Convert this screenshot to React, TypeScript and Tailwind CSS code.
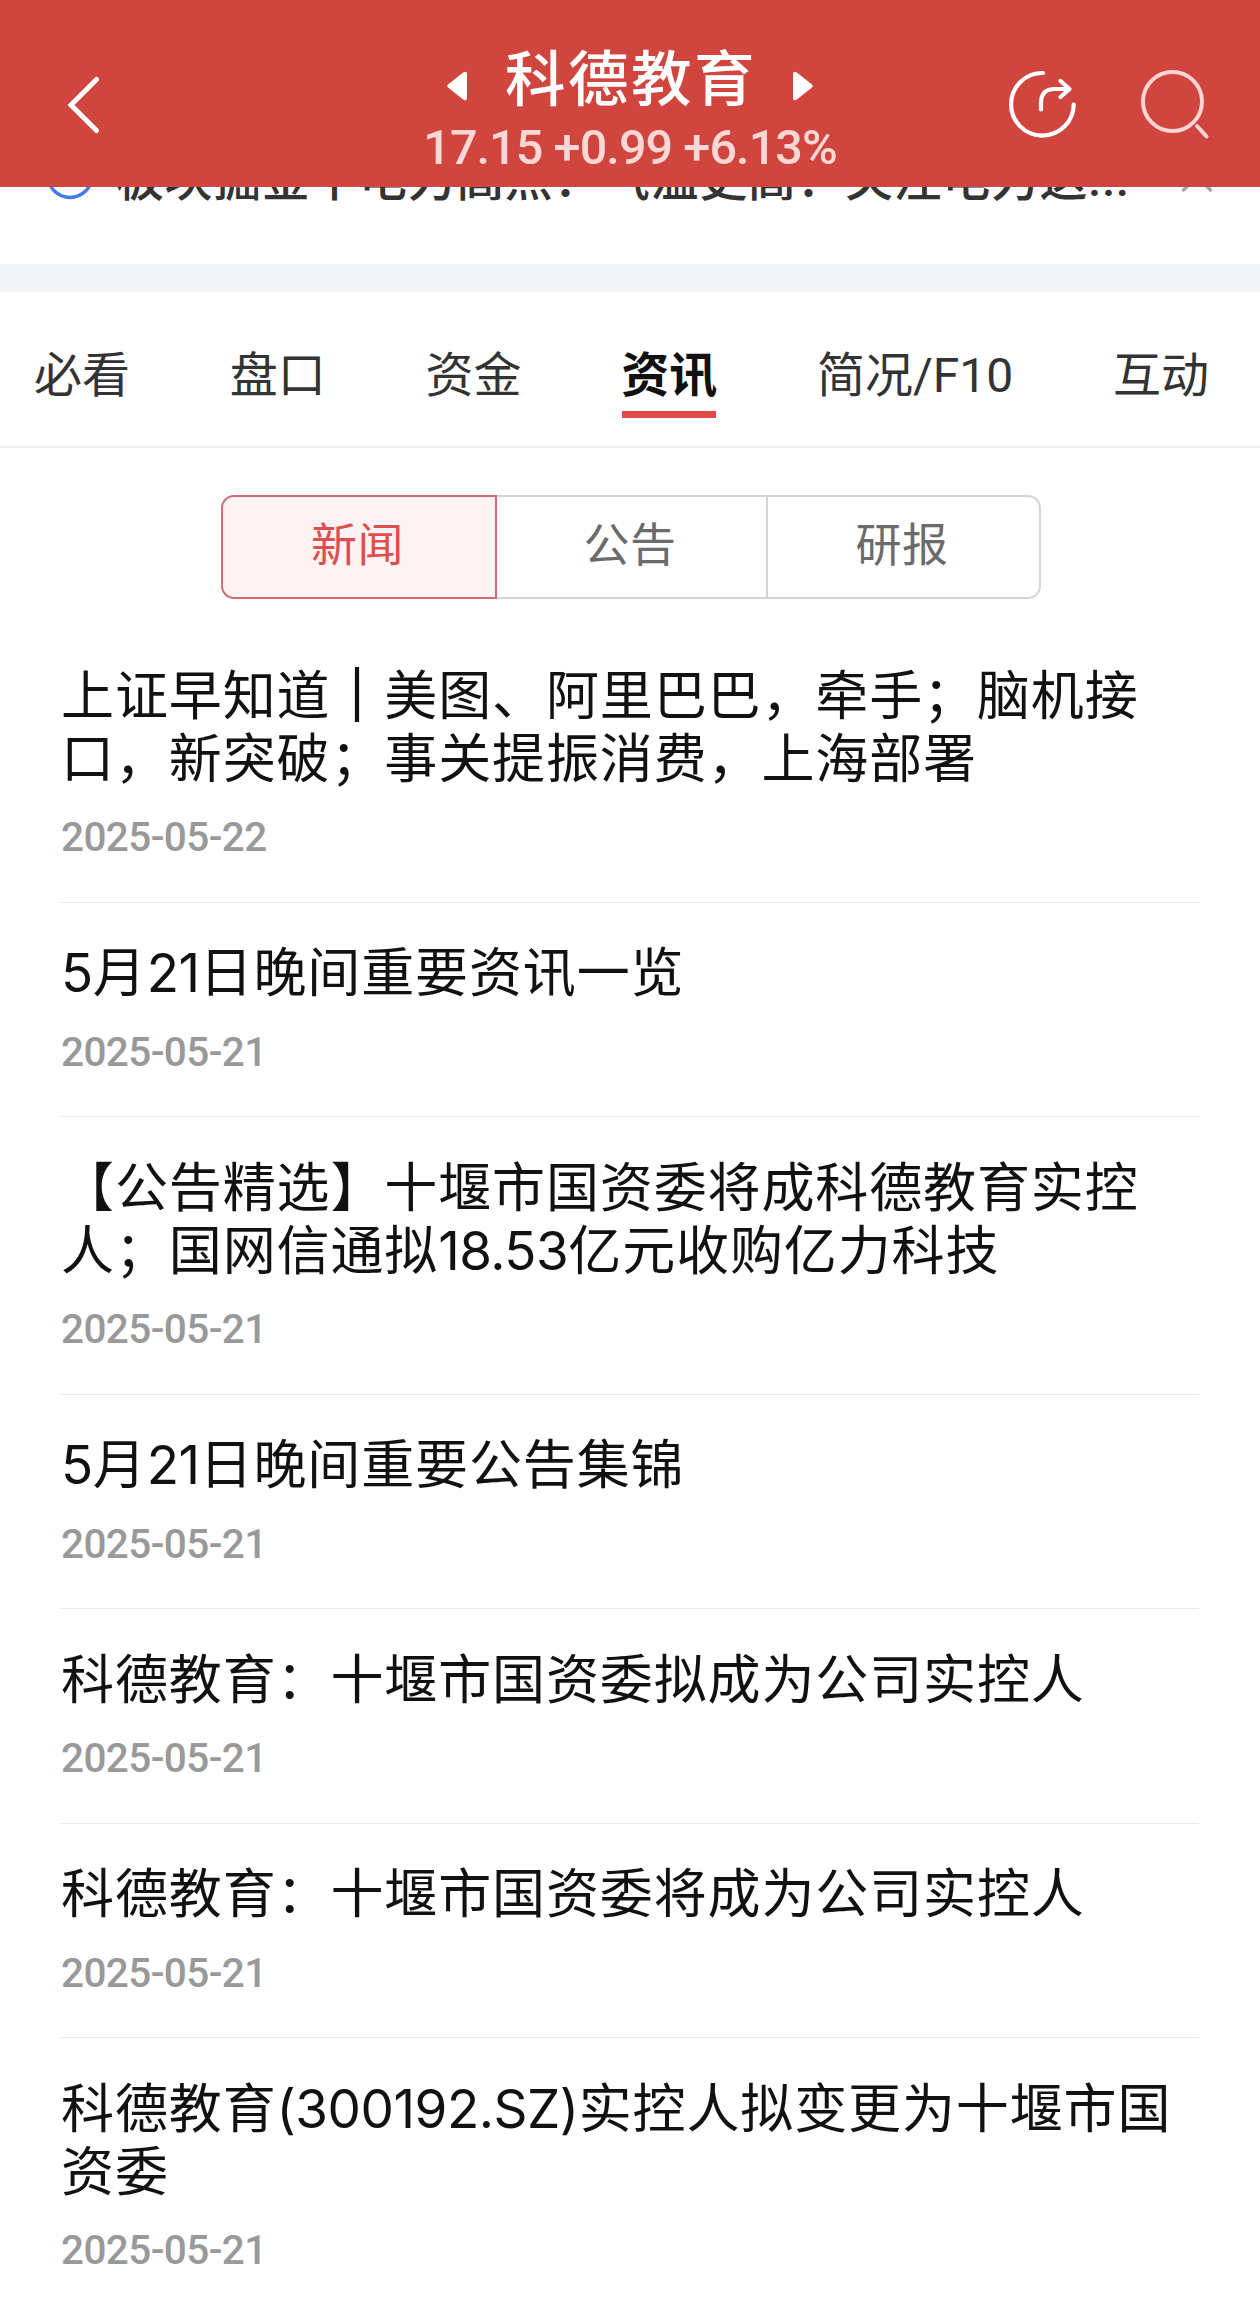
import { useState } from "react";
import clsx from "clsx";

const tabs = ["必看", "盘口", "资金", "资讯", "简况/F10", "互动"];
const segments = ["新闻", "公告", "研报"];

const news = [
  { lines: ["上证早知道｜美图、阿里巴巴，牵手；脑机接", "口，新突破；事关提振消费，上海部署"], date: "2025-05-22" },
  { lines: ["5月21日晚间重要资讯一览"], date: "2025-05-21" },
  { lines: ["【公告精选】十堰市国资委将成科德教育实控", "人；国网信通拟18.53亿元收购亿力科技"], date: "2025-05-21" },
  { lines: ["5月21日晚间重要公告集锦"], date: "2025-05-21" },
  { lines: ["科德教育：十堰市国资委拟成为公司实控人"], date: "2025-05-21" },
  { lines: ["科德教育：十堰市国资委将成为公司实控人"], date: "2025-05-21" },
  { lines: ["科德教育(300192.SZ)实控人拟变更为十堰市国", "资委"], date: "2025-05-21" },
];

function Header() {
  return (
    <header className="relative z-10 flex h-[187px] bg-[#d0453e] text-white">
      <button aria-label="返回" className="mt-[75px] ml-[66px] h-[60px] w-[36px]">
        <svg width="36" height="60" viewBox="0 0 36 60" fill="none" stroke="currentColor" strokeWidth="5" strokeLinecap="round">
          <path d="M30.5 4.5 5 30l25.500 25.500" />
        </svg>
      </button>

      <div className="ml-[298px] flex w-[460px] flex-col items-center">
        <div className="mt-[42px] flex items-center">
          <svg width="20" height="30" viewBox="0 0 20 30" className="mt-[21px]" fill="currentColor">
            <path d="M1 13.500 16.500 1.200Q20 -.5 20 3v24q0 3.500-3.500 1.800L1 16.500q-1.500-1.500 0-3Z" />
          </svg>
          <h1 className="mr-[36px] ml-[38px] text-[60.500px] leading-[66px] font-medium tracking-[2.500px]">科德教育</h1>
          <svg width="20" height="30" viewBox="0 0 20 30" className="mt-[21px]" fill="currentColor">
            <path d="M19 13.500 3.500 1.200Q0 -.5 0 3v24q0 3.500 3.500 1.800L19 16.500q1.500-1.500 0-3Z" />
          </svg>
        </div>
        <p className="mt-[15px] font-[Roboto] text-[48.500px] leading-[50px] font-medium tracking-[-0.9px] whitespace-nowrap text-[#f8d8d6]">
          17.15 +0.99 +6.13%
        </p>
      </div>

      <div className="mt-[68px] mr-[50px] ml-auto flex gap-[60px]">
        <button aria-label="分享" className="h-[72px] w-[72px]">
          <svg width="72" height="72" viewBox="0 0 72 72" fill="none" stroke="currentColor" strokeWidth="4.200" strokeLinecap="round" strokeLinejoin="round">
            <path d="M37 5A31.300 31.300 0 1 0 67.700 36.500" />
            <path d="M35 41.500V35q0-14 14-14h14M54.500 13l9 8-9 8" />
          </svg>
        </button>
        <button aria-label="搜索" className="h-[72px] w-[72px] text-[#ffd5d3]">
          <svg width="72" height="72" viewBox="0 0 72 72" fill="none" stroke="currentColor" strokeWidth="4" strokeLinecap="round">
            <circle cx="34.500" cy="33.500" r="29.500" />
            <path d="m59 58 9.500 10.500" />
          </svg>
        </button>
      </div>
    </header>
  );
}

// Strip that is scrolled half way under the header
function PromoStrip() {
  return (
    <div className="h-[77px] overflow-hidden">
      <div className="-mt-[35px] flex items-start text-[#333]">
        <svg width="48" height="48" viewBox="0 0 48 48" className="ml-[46px] shrink-0" fill="none" stroke="#4678f0" strokeWidth="3.500">
          <circle cx="24" cy="23.500" r="22" />
        </svg>
        <p className="ml-[22px] w-[1040px] pt-[4px] font-[Roboto,'Noto_Sans_CJK_SC',sans-serif] text-[48px] leading-[48px] font-medium tracking-[0.600px] whitespace-nowrap">
          板块掘金丨电力高点：气温更高：关注电力这...
        </p>
        <svg width="34" height="48" viewBox="0 0 34 48" className="ml-[24px] shrink-0" fill="none" stroke="#a6a6a6" strokeWidth="3.500" strokeLinecap="round">
          <path d="m3.500 11 27 27M30.500 11l-27 27" />
        </svg>
      </div>
    </div>
  );
}

// Digits and latin letters sit tighter than the Chinese glyphs around them
function Headline({ text }: { text: string }) {
  return (
    <span className="block">
      {text.split(/([!-~]+|｜)/).map((part, i) => {
        if (part === "｜") return <span key={i} className="[-webkit-text-stroke:2px_#111]">{part}</span>;
        return <span key={i} className={i % 2 ? "tracking-[-0.500px]" : undefined}>{part}</span>;
      })}
    </span>
  );
}

export default function App() {
  const [tab, setTab] = useState("资讯");
  const [segment, setSegment] = useState("新闻");

  return (
    <div className="h-[2315px] w-[1260px] overflow-hidden bg-white font-['Noto_Sans_CJK_SC',sans-serif]">
      <Header />
      <PromoStrip />

      <div className="h-[28px] bg-[#f3f4f8]" />

      <nav className="flex h-[156px] justify-between border-b-2 border-[#edf0f6] pt-[54px] pr-[51px] pl-[34px]">
        {tabs.map((item) => (
          <button
            key={item}
            onClick={() => setTab(item)}
            className={clsx(
              "flex flex-col items-center font-[Roboto,'Noto_Sans_CJK_SC',sans-serif] text-[48px] leading-[60px] whitespace-nowrap",
              tab === item ? "font-bold text-[#111]" : "font-normal text-[#333]"
            )}
          >
            {item}
            {tab === item && <span className="mt-[5px] h-[7px] w-[94px] bg-[#e04a4a]" />}
          </button>
        ))}
      </nav>

      <div className="mt-[47px] ml-[221px] flex h-[104px] w-[820px]">
        {segments.map((item, i) => (
          <button
            key={item}
            onClick={() => setSegment(item)}
            className={clsx(
              "border-2 pr-[3px] pb-[11px] text-[46px] tracking-[0.500px]",
              i === 0 && "w-[276px] rounded-l-[13px]",
              i === 1 && "w-[269px] border-x-0",
              i === 2 && "w-[275px] rounded-r-[13px]",
              segment === item ? "border-[#cf6d70] bg-[#fdf3f4] text-[#df4e4e]" : "border-[#d4d4d4] text-[#6b6b6b]"
            )}
          >
            {item}
          </button>
        ))}
      </div>

      <ul className="mt-[26px] ml-[61px] w-[1138px]">
        {news.map((item) => (
          <li key={item.lines[0]} className="border-b border-[#e8e8e8] pt-[39.500px] pb-[44.500px]">
            <h2 className="font-[Inter,'Noto_Sans_CJK_SC',sans-serif] text-[53px] leading-[63px] tracking-[0.880px] whitespace-nowrap text-[#111]">
              {item.lines.map((line) => (
                <Headline key={line} text={line} />
              ))}
            </h2>
            <p className="mt-[26.500px] font-[Roboto] text-[40.500px] leading-[40px] font-medium tracking-[-0.600px] text-[#999]">
              {item.date}
            </p>
          </li>
        ))}
      </ul>
    </div>
  );
}
